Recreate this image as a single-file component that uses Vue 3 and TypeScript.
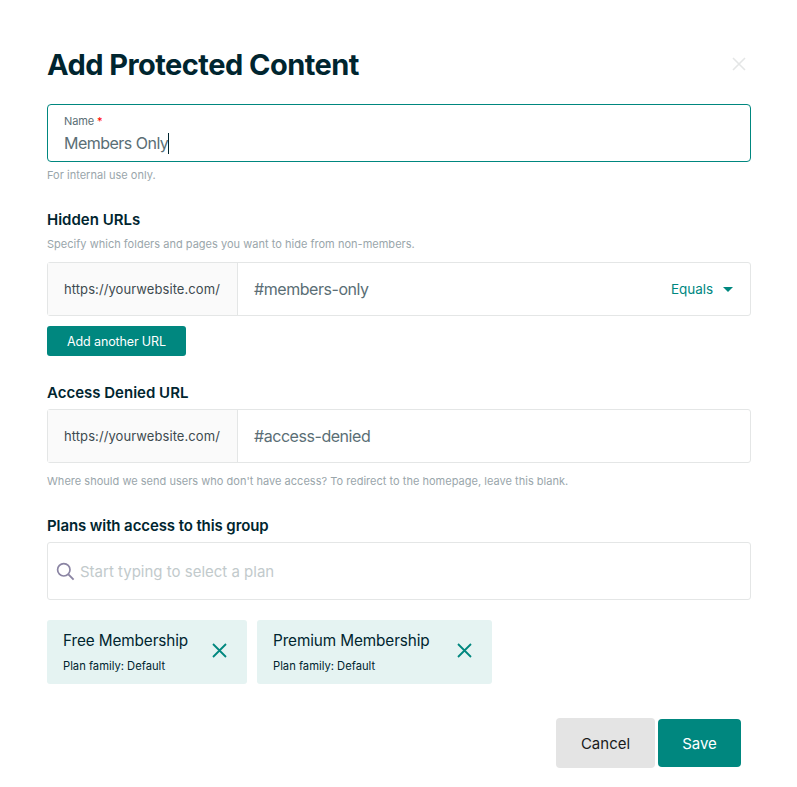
<script setup lang="ts">
interface Plan { name: string; family: string }
const plans: Plan[] = [
  { name: 'Free Membership', family: 'Plan family: Default' },
  { name: 'Premium Membership', family: 'Plan family: Default' },
]
</script>

<template>
  <div class="modal">
    <header class="head">
      <h1>Add Protected Content</h1>
      <svg class="close" width="14" height="14" viewBox="0 0 14 14"><path d="M1 1l12 12M13 1L1 13" stroke="#e4e6e6" stroke-width="1.6" fill="none" /></svg>
    </header>

    <div class="name-box">
      <div class="name-label">Name <span class="req">*</span></div>
      <div class="name-value">Members Only<span class="caret"></span></div>
    </div>
    <p class="help first">For internal use only.</p>

    <h2 class="hidden-title">Hidden URLs</h2>
    <p class="help sub">Specify which folders and pages you want to hide from non-members.</p>
    <div class="url-box">
      <div class="prefix">https://yourwebsite.com/</div>
      <div class="url-value">#members-only</div>
      <div class="equals">Equals<span class="tri"></span></div>
    </div>
    <button class="add">Add another URL</button>

    <h2 class="denied-title">Access Denied URL</h2>
    <div class="url-box">
      <div class="prefix">https://yourwebsite.com/</div>
      <div class="url-value">#access-denied</div>
    </div>
    <p class="help denied-help">Where should we send users who don't have access? To redirect to the homepage, leave this blank.</p>

    <h2 class="plans-title">Plans with access to this group</h2>
    <div class="search">
      <svg width="19" height="19" viewBox="0 0 19 19"><circle cx="7.8" cy="7.8" r="6.2" stroke="#8a84a3" stroke-width="1.7" fill="none" /><path d="M12.4 12.4l5.2 5.2" stroke="#8a84a3" stroke-width="1.9" fill="none" /></svg>
      <span>Start typing to select a plan</span>
    </div>

    <div class="chips">
      <div v-for="p in plans" :key="p.name" class="chip">
        <div class="chip-text">
          <div class="chip-name">{{ p.name }}</div>
          <div class="chip-family">{{ p.family }}</div>
        </div>
        <svg class="chip-x" width="15" height="15" viewBox="0 0 15 15"><path d="M1 1l13 13M14 1L1 14" stroke="#00877f" stroke-width="1.8" fill="none" /></svg>
      </div>
    </div>

    <footer class="actions">
      <button class="cancel">Cancel</button>
      <button class="save">Save</button>
    </footer>
  </div>
</template>

<style>
html, body { margin: 0; background: #fff; }
</style>

<style scoped>
.modal {
  box-sizing: border-box;
  width: 797px;
  height: 787px;
  padding: 46px 46px 0 47px;
  font-family: Inter, "Liberation Sans", sans-serif;
  color: #00252f;
  background: #fff;
}
.head { display: flex; justify-content: space-between; align-items: center; height: 36px; padding-right: 5px; }
h1 { margin: 2px 0 0; font-size: 29px; line-height: 36px; font-weight: 700; letter-spacing: -0.54px; }
.close { display: block; }
.name-box {
  box-sizing: border-box;
  height: 58px;
  margin-top: 22px;
  padding: 9px 16px 0;
  border: 1px solid #00877f;
  border-radius: 4px;
}
.name-label { font-size: 11px; line-height: 14px; color: #5a6e75; letter-spacing: -0.1px; }
.req { color: #f00; }
.name-value { margin-top: 4px; font-size: 16px; line-height: 22px; color: #5a6e75; letter-spacing: -0.52px; display: flex; align-items: center; }
.caret { display: inline-block; width: 1px; height: 21px; background: #00252f; }
.help { margin: 0; font-size: 11px; line-height: 16px; letter-spacing: 0.02px; color: #9aa6ab; }
.first { margin-top: 5px; }
h2 { margin: 0; font-size: 15px; line-height: 20px; font-weight: 600; }
.hidden-title { margin-top: 27px; }
.sub { margin-top: 6px; }
.url-box {
  box-sizing: border-box;
  display: flex;
  align-items: center;
  height: 54px;
  border: 1px solid #e4e6e6;
  border-radius: 3px;
}
.sub + .url-box { margin-top: 10px; }
.prefix {
  box-sizing: border-box;
  display: flex;
  align-items: center;
  align-self: stretch;
  width: 190px;
  padding-left: 16px;
  background: #fafafa;
  border-right: 1px solid #e4e6e6;
  font-size: 13px;
  letter-spacing: 0.08px;
  color: #3d4a4f;
}
.url-value { flex: 1; padding-left: 16px; font-size: 16px; letter-spacing: -0.45px; color: #5a6e75; }
.equals { display: flex; align-items: center; gap: 10px; padding-right: 17px; font-size: 13.5px; letter-spacing: -0.05px; color: #00877f; }
.tri { width: 0; height: 0; border-left: 5px solid transparent; border-right: 5px solid transparent; border-top: 5px solid #00877f; }
.add {
  display: block;
  width: 139px;
  height: 30px;
  margin-top: 10px;
  padding: 0;
  border: 0;
  border-radius: 3px;
  background: #00877f;
  color: #fff;
  font: 400 12.5px Inter, "Liberation Sans", sans-serif;
  letter-spacing: -0.13px;
}
.denied-title { margin-top: 27px; margin-bottom: 6px; }
.denied-help { margin-top: 10px; }
.plans-title { margin-top: 27px; margin-bottom: 6px; letter-spacing: -0.1px; }
.search {
  box-sizing: border-box;
  display: flex;
  align-items: center;
  gap: 5px;
  height: 58px;
  padding-left: 8px;
  border: 1px solid #e4e6e6;
  border-radius: 3px;
  font-size: 15px;
  color: #c2cacc;
}
.search svg { display: block; }
.chips { display: flex; gap: 10px; margin-top: 20px; }
.chip {
  box-sizing: border-box;
  display: flex;
  align-items: center;
  justify-content: space-between;
  height: 64px;
  padding: 0 20px 0 16px;
  border-radius: 3px;
  background: #e5f3f2;
}
.chip:nth-child(1) { width: 200px; }
.chip:nth-child(2) { width: 235px; }
.chip-name { font-size: 15.3px; line-height: 22px; color: #00252f; letter-spacing: -0.1px; }
.chip-family { margin-top: 6px; font-size: 11.2px; line-height: 16px; color: #00252f; }
.chip-x { margin-bottom: 4px; }
.actions { display: flex; justify-content: flex-end; align-items: center; gap: 3px; margin-top: 34px; padding-right: 10px; }
button { cursor: pointer; }
.cancel, .save {
  padding: 0;
  border: 0;
  border-radius: 4px;
  font: 400 15px Inter, "Liberation Sans", sans-serif;
}
.cancel { width: 99px; height: 50px; background: #e4e4e4; color: #1a1a1a; }
.save { width: 83px; height: 48px; background: #00877f; color: #fff; }
</style>
